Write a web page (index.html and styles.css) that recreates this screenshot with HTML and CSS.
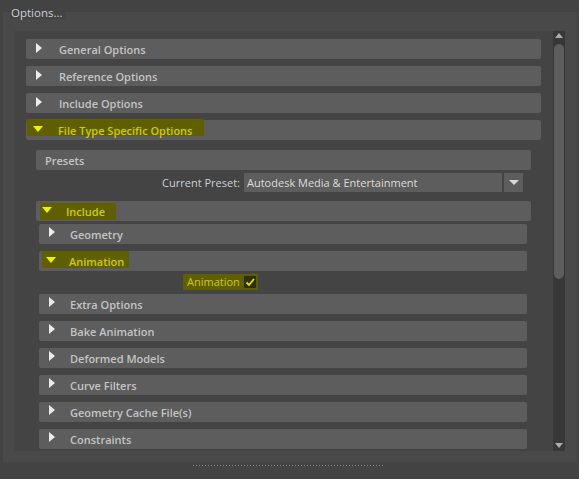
FILE: index.html
```html
<!DOCTYPE html>
<html>
<head>
<meta charset="utf-8">
<link rel="stylesheet" href="styles.css">
</head>
<body>
<div class="frame">
  <div class="legend">Options...</div>
  <div class="scroll">
    <div class="content">
      <div class="row l1"><span class="tri-r"></span><span class="lbl">General Options</span></div>
      <div class="row l1"><span class="tri-r"></span><span class="lbl">Reference Options</span></div>
      <div class="row l1"><span class="tri-r"></span><span class="lbl">Include Options</span></div>
      <div class="row l1 open"><span class="hl hl-ft"></span><span class="tri-d"></span><span class="lbl yl">File Type Specific Options</span></div>
      <div class="sect">
        <div class="bar">Presets</div>
        <div class="preset-line">
          <span class="plabel">Current Preset:</span>
          <div class="combo">Autodesk Media &amp; Entertainment</div>
          <div class="combo-btn"><span class="tri-sm"></span></div>
        </div>
        <div class="row l2 open"><span class="hl hl-inc"></span><span class="tri-d"></span><span class="lbl yl">Include</span></div>
        <div class="sub">
          <div class="row l3"><span class="tri-r"></span><span class="lbl">Geometry</span></div>
          <div class="row l3 open"><span class="hl hl-anim"></span><span class="tri-d"></span><span class="lbl yl">Animation</span></div>
          <div class="check-line">
            <span class="hl hl-chk"></span>
            <span class="clabel">Animation</span>
            <span class="cbox"><svg width="12" height="12" viewBox="0 0 12 12"><path d="M2.5 6.5 L5 9 L10 3" fill="none" stroke="#e6e600" stroke-width="1.8"/></svg></span>
          </div>
          <div class="row l3"><span class="tri-r"></span><span class="lbl">Extra Options</span></div>
          <div class="row l3"><span class="tri-r"></span><span class="lbl">Bake Animation</span></div>
          <div class="row l3"><span class="tri-r"></span><span class="lbl">Deformed Models</span></div>
          <div class="row l3"><span class="tri-r"></span><span class="lbl">Curve Filters</span></div>
          <div class="row l3"><span class="tri-r"></span><span class="lbl">Geometry Cache File(s)</span></div>
          <div class="row l3"><span class="tri-r"></span><span class="lbl">Constraints</span></div>
        </div>
      </div>
    </div>
    <div class="scrollbar">
      <div class="sb-btn"><span class="sb-up"></span></div>
      <div class="sb-track"><div class="sb-thumb"></div></div>
      <div class="sb-btn bottom"><span class="sb-down"></span></div>
    </div>
  </div>
</div>
<div class="grip"></div>
</body>
</html>
```

FILE: styles.css
```css
html, body {
  margin: 0;
  padding: 0;
}
body {
  width: 579px;
  height: 479px;
  background: #434343;
  font-family: "Open Sans", "Noto Sans", sans-serif;
  font-size: 11px;
  color: #c4c4c4;
  overflow: hidden;
}
.frame {
  display: flex;
  flex-direction: column;
  margin: 12px 2px 0 3px;
  height: 450px;
  background: #494949;
}
.legend {
  align-self: flex-start;
  margin: -6px 0 0 7px;
  height: 13px;
  line-height: 13px;
  padding: 0 2px 0 1px;
  background: #434343;
  color: #c9d0d8;
  font-size: 11.5px;
}
.scroll {
  display: flex;
  margin: 12px 12px 0 11px;
  height: 420px;
  background: #444444;
}
.content {
  flex: 1;
  overflow: hidden;
  padding: 8px 12px 0 12px;
}
.row {
  position: relative;
  display: flex;
  align-items: flex-start;
  height: 20px;
  margin-bottom: 7px;
  background: #5d5d5d;
  border-radius: 2px;
}
.lbl {
  position: relative;
  top: 1px;
  line-height: 20px;
  font-weight: 600;
  white-space: nowrap;
}
.yl { color: #cdcd00; }
.tri-r {
  position: relative;
  width: 0;
  height: 0;
  border-left: 6px solid #ececec;
  border-top: 5px solid transparent;
  border-bottom: 5px solid transparent;
  margin-top: 4px;
}
.tri-d {
  position: relative;
  width: 0;
  height: 0;
  border-top: 6px solid #f2f200;
  border-left: 5.5px solid transparent;
  border-right: 5.5px solid transparent;
  margin-top: 6px;
}
.l1 .tri-r { margin-left: 10px; }
.l1 .lbl { margin-left: 17px; }
.l1 .tri-d { margin-left: 7px; }
.l1 .tri-d + .lbl { margin-left: 15px; }

.hl {
  position: absolute;
  background: #5f5f00;
  border-radius: 1px;
}
.hl-ft { left: 1px; top: -1px; width: 177px; height: 17px; }
.hl-inc { left: 4px; top: 2px; width: 76px; height: 17px; }
.hl-anim { left: 3px; top: 0; width: 87px; height: 17px; }
.hl-chk { left: 144px; top: 3px; width: 75px; height: 16px; }

.sect {
  padding: 3px 10px 0 10px;
}
.bar {
  height: 20px;
  line-height: 21px;
  padding-left: 9px;
  margin-bottom: 3px;
  background: #5d5d5d;
  border-radius: 2px;
  font-weight: 600;
}
.preset-line {
  display: flex;
  justify-content: flex-end;
  align-items: stretch;
  height: 19px;
  padding-right: 8px;
  margin-bottom: 9px;
}
.plabel {
  line-height: 20px;
  margin-right: 4px;
  color: #cbd0d6;
}
.combo {
  width: 255px;
  padding-left: 3px;
  line-height: 20px;
  background: #5d5d5d;
  color: #dcdcdc;
  white-space: nowrap;
}
.combo-btn {
  display: flex;
  justify-content: center;
  align-items: center;
  width: 19px;
  margin-left: 2px;
  background: #5d5d5d;
}
.tri-sm {
  width: 0;
  height: 0;
  border-top: 5px solid #d8d8d8;
  border-left: 5px solid transparent;
  border-right: 5px solid transparent;
}
.l2 { margin-bottom: 3px; }
.l2 .tri-d { margin-left: 6px; }
.l2 .lbl { margin-left: 14px; }

.sub {
  padding: 0 4px 0 3px;
}
.l3 .tri-r { margin-left: 10px; margin-top: 3px; }
.l3 .lbl { margin-left: 15px; }
.l3 .tri-d { margin-left: 7px; }
.l3 .tri-d + .lbl { margin-left: 13px; }
.l3.open { margin-bottom: 0; }

.check-line {
  position: relative;
  display: flex;
  align-items: center;
  height: 23px;
  padding-left: 148px;
}
.clabel {
  position: relative;
  color: #cdcd00;
  line-height: 16px;
  margin-top: -2px;
}
.cbox {
  position: relative;
  display: block;
  width: 12px;
  height: 12px;
  margin-left: 4px;
  margin-top: -2px;
  background: #2f2f14;
}
.cbox svg { display: block; }

.scrollbar {
  display: flex;
  flex-direction: column;
  width: 12px;
  background: #373737;
}
.sb-btn {
  height: 13px;
  display: flex;
  justify-content: center;
  align-items: center;
}
.sb-up {
  width: 0; height: 0;
  border-bottom: 5px solid #acacac;
  border-left: 4.5px solid transparent;
  border-right: 4.5px solid transparent;
  margin-top: -4px;
}
.sb-down {
  width: 0; height: 0;
  border-top: 5px solid #acacac;
  border-left: 4.5px solid transparent;
  border-right: 4.5px solid transparent;
  margin-top: 2px;
}
.sb-track {
  flex: 1;
  padding: 0 1px;
}
.sb-thumb {
  height: 235px;
  background: #5d5d5d;
  border-radius: 5px;
}
.grip {
  margin: 3px 0 0 193px;
  width: 190px;
  height: 1px;
  background-image: linear-gradient(to right, #8c8c8c 1px, transparent 1px);
  background-size: 3px 1px;
}
```
